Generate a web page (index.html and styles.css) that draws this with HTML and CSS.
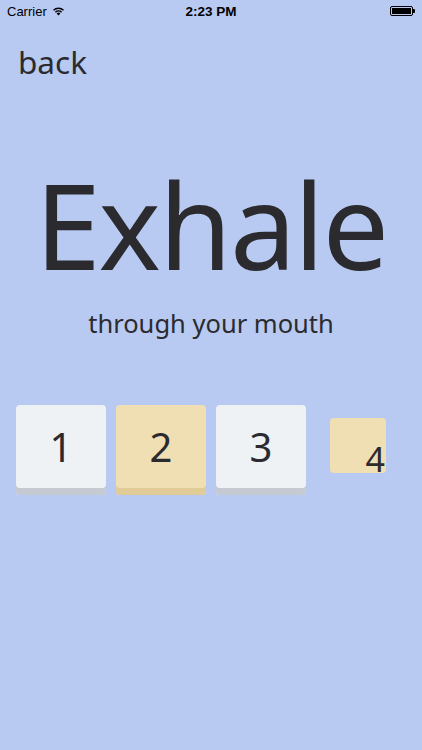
FILE: index.html
```html
<!DOCTYPE html>
<html lang="en">
<head>
<meta charset="utf-8">
<title>Exhale</title>
<link rel="stylesheet" href="styles.css">
</head>
<body>
<div class="screen">
  <div class="status">
    <div class="status-left">
      <span class="carrier">Carrier</span>
      <svg class="wifi" width="13" height="10" viewBox="0 0 13 10">
        <path d="M6.5 9.6 L4.6 7.5 A2.8 2.8 0 0 1 8.4 7.5 Z" fill="#000"/>
        <path d="M2.9 5.7 A5.2 5.2 0 0 1 10.1 5.7 L9.1 6.8 A3.8 3.8 0 0 0 3.9 6.8 Z" fill="#000"/>
        <path d="M1 3.7 A7.9 7.9 0 0 1 12 3.7 L11 4.8 A6.5 6.5 0 0 0 2 4.8 Z" fill="#000"/>
      </svg>
    </div>
    <div class="time">2:23 PM</div>
    <div class="status-right">
      <div class="battery"><div class="battery-fill"></div></div><div class="battery-tip"></div>
    </div>
  </div>
  <div class="back">back</div>
  <h1 class="title">Exhale</h1>
  <p class="subtitle">through your mouth</p>
  <div class="tiles">
    <div class="tile tile-light"><span>1</span></div>
    <div class="tile tile-yellow"><span>2</span></div>
    <div class="tile tile-light"><span>3</span></div>
    <div class="tile-slot"><div class="tile-small"><span>4</span></div></div>
  </div>
</div>
</body>
</html>
```
FILE: styles.css
```css
* { box-sizing: border-box; }
html, body { margin: 0; padding: 0; }
body {
  width: 422px;
  height: 750px;
  background: #b8c9f2;
  font-family: "Noto Sans", "Open Sans", sans-serif;
  color: #2b2b2f;
  overflow: hidden;
}
.screen { width: 422px; height: 750px; }
.status {
  height: 22px;
  display: flex;
  align-items: center;
  justify-content: space-between;
  padding: 0 7px 0 7px;
  font-family: "Liberation Sans", Arial, sans-serif;
  font-size: 13px;
  color: #000;
  position: relative;
}
.status-left { display: flex; align-items: center; gap: 5px; width: 120px; }
.wifi { margin-top: -1px; }
.time {
  font-weight: bold;
  font-size: 13.5px;
  position: absolute;
  left: 0; right: 0;
  text-align: center;
  top: 4px;
}
.status-right { display: flex; align-items: center; justify-content: flex-end; width: 120px; }
.battery {
  width: 23px; height: 10px;
  border: 1px solid #000;
  border-radius: 2px;
  padding: 1px;
}
.battery-fill { width: 100%; height: 100%; background: #000; }
.battery-tip { width: 2px; height: 4px; background: #000; border-radius: 0 1px 1px 0; }
.back {
  margin: 20px 0 0 18px;
  font-size: 31.5px;
  line-height: 40px;
  letter-spacing: 0;
}
.title {
  margin: 78px 0 0 0;
  font-weight: normal;
  text-align: center;
  font-size: 118px;
  line-height: 130px;
  letter-spacing: -2px;
}
.subtitle {
  margin: 18px 0 0 0;
  text-align: center;
  font-size: 25.5px;
  line-height: 30px;
}
.tiles {
  margin: 67px 0 0 16px;
  display: flex;
  gap: 10px;
  align-items: flex-start;
}
.tile {
  width: 90px;
  height: 90px;
  border-radius: 4px;
  display: flex;
  align-items: center;
  justify-content: center;
  padding-bottom: 7px;
  font-size: 40px;
}
.tile-light { background: #eff2f5; box-shadow: inset 0 -7px 0 #c5cad2; }
.tile-yellow { background: #f1dfb4; box-shadow: inset 0 -7px 0 #e1cb96; }
.tile-slot {
  width: 90px;
  height: 90px;
  display: flex;
  align-items: center;
  justify-content: center;
  padding-bottom: 7px;
}
.tile-small {
  width: 56px;
  height: 55px;
  margin-left: -6px;
  background: #f1dfb4;
  border-radius: 4px;
  display: flex;
  align-items: flex-end;
  justify-content: flex-end;
  font-size: 34px;
  line-height: 34px;
  padding-right: 1px;
  margin-top: -2px;
}
.tile-small span { margin-bottom: -3px; }
```
